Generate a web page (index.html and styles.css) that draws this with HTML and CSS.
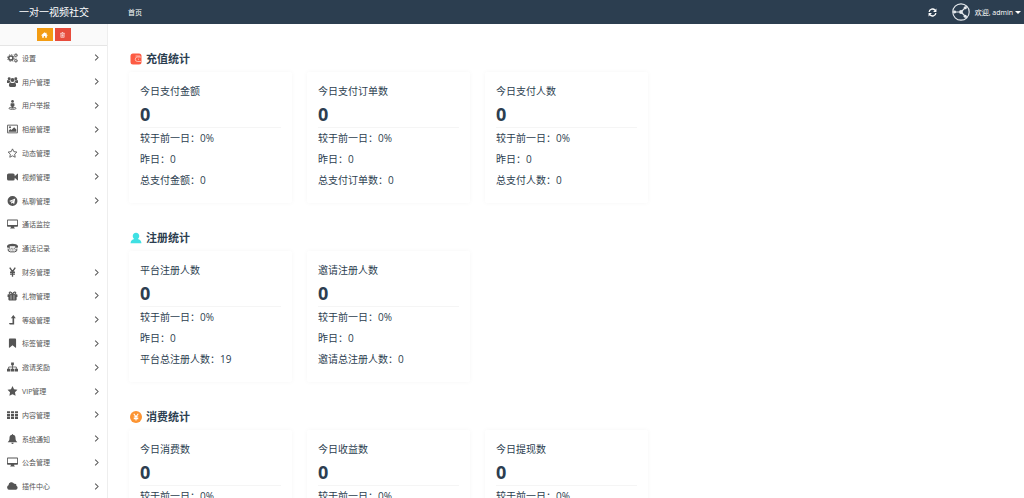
FILE: index.html
```html
<!DOCTYPE html>
<html lang="zh-CN">
<head>
<meta charset="utf-8">
<meta name="viewport" content="width=device-width, initial-scale=1">
<title>一对一视频社交</title>
<link rel="stylesheet" href="styles.css">
</head>
<body>
<svg class="sprite" aria-hidden="true">
  <symbol id="chevron" viewBox="0 0 6 8"><path d="M1.800 1.500 4.400 4 1.800 6.500" fill="none" stroke="currentColor" stroke-width=".9"/></symbol>
  <symbol id="cogs" viewBox="0 0 20 18"><g fill="none" stroke="currentColor"><circle cx="7" cy="9" r="3.800" stroke-width="2.800"/><circle cx="7" cy="9" r="5.900" stroke-width="1.800" stroke-dasharray="2.500 2.130"/><circle cx="16" cy="4.200" r="2" stroke-width="1.800"/><circle cx="16" cy="4.200" r="3.400" stroke-width="1.200" stroke-dasharray="1.700 1.860"/><circle cx="16" cy="13.800" r="2" stroke-width="1.800"/><circle cx="16" cy="13.800" r="3.400" stroke-width="1.200" stroke-dasharray="1.700 1.860"/></g></symbol>
  <symbol id="users" viewBox="0 0 20 18"><circle cx="4" cy="3" r="2.700"/><circle cx="16" cy="3" r="2.700"/><circle cx="10" cy="5.500" r="3.700"/><path d="M0 10V7.500q0-2 1.500-2 2 1.300 3.800.6Q5.500 8.300 6.500 9.300q-2 0-3 1.700H1Q0 11 0 10zM20 10V7.500q0-2-1.500-2-2 1.300-3.800.6-.2 2.200-1.200 3.200 2 0 3 1.700H19q1 0 1-1zM3.500 15.500q0-5.500 3.200-5.500 3.300 2 6.600 0 3.200 0 3.200 5.500 0 2.500-2.500 2.500H6q-2.500 0-2.500-2.500z"/></symbol>
  <symbol id="street" viewBox="0 0 20 18"><circle cx="10" cy="2.600" r="2.500"/><path d="M7.500 5.600h5q1 0 1 1V11h-1.300v4.500H7.800V11H6.500V6.600q0-1 1-1z"/><path d="M7 13.300c-6 1-4 3.600 3 3.600s9-2.600 3-3.600" fill="none" stroke="currentColor" stroke-width="1.600"/></symbol>
  <symbol id="image" viewBox="0 0 20 18"><path d="M1 2h18v14H1z" fill="none" stroke="currentColor" stroke-width="1.600"/><circle cx="5.500" cy="6" r="1.800"/><path d="M3 14v-2l3-3 2 2 5-5 4 4v4z"/></symbol>
  <symbol id="star-o" viewBox="0 0 20 18"><path d="m10 1.500 2.400 5 5.500.8-4 3.900 1 5.500-4.900-2.600-4.900 2.600 1-5.500-4-3.900 5.500-.8z" fill="none" stroke="currentColor" stroke-width="1.600"/></symbol>
  <symbol id="video" viewBox="0 0 20 18"><path d="M3 2.500h8q3 0 3 3v2L19 3q1-.5 1 .5v11q0 1-1 .5l-5-4.500v2q0 3-3 3H3q-3 0-3-3v-7q0-3 3-3z"/></symbol>
  <symbol id="telegram" viewBox="0 0 20 18"><path fill-rule="evenodd" d="M10 0a9 9 0 1 1 0 18 9 9 0 0 1 0-18zM4 9l3 1.200L8 14l2-1.700 3 2L15 4.500zM7.800 10 13 6.500l-4 4-.4 1.800z"/></symbol>
  <symbol id="desktop" viewBox="0 0 20 18"><path fill-rule="evenodd" d="M1.500 1h17Q20 1 20 2.500v10q0 1.500-1.500 1.500H13v1.500l1.500 1.500h-9L7 15.500V14H1.500Q0 14 0 12.500v-10Q0 1 1.500 1zM1.500 2.500V11h17V2.500z"/></symbol>
  <symbol id="tty" viewBox="0 0 20 18"><path d="M0 8V5.500C2 0 18 0 20 5.500V8l-5 .8V6H5v2.800z"/><g fill="none" stroke="currentColor" stroke-width="1.600" stroke-dasharray="1.900 1"><path d="M4 9.500h12M3 12.500h14"/></g><path d="M2 10q-1 6 4 6h8q5 0 4-6" fill="none" stroke="currentColor" stroke-width="1.800"/></symbol>
  <symbol id="yen" viewBox="0 0 20 18"><path d="m5 1 5 7.500L15 1M10 8v9.500M5.500 9.500h9M5.500 12.700h9" fill="none" stroke="currentColor" stroke-width="2.400"/></symbol>
  <symbol id="gift" viewBox="0 0 20 18"><path d="M2 6h16q1 0 1 1v4h-1.500v4.500q0 1.500-1.500 1.500H4q-1.500 0-1.500-1.500V11H1V7q0-1 1-1z"/><path d="M10 6C8 1 4 1 4 3.600S8 6 10 6c2 0 6 .2 6-2.400S12 1 10 6z" fill="none" stroke="currentColor" stroke-width="1.900"/><path d="M7.300 7.500v8M12.700 7.500v8" stroke="#fff" stroke-width="1"/></symbol>
  <symbol id="level" viewBox="0 0 20 18"><path d="M11.500 0 16 6h-3v11H5l-1.500-2.500H10V6H7z"/></symbol>
  <symbol id="bookmark" viewBox="0 0 20 18"><path d="M5 1h10q1.500 0 1.500 1.500V17q-.5 1-1.500.3L10 13l-5 4.300Q4 18 3.500 17V2.500Q3.500 1 5 1z"/></symbol>
  <symbol id="sitemap" viewBox="0 0 20 18"><path d="M7.500 1h5v5h-5zM0 12h6v5H0zM7 12h6v5H7zM14 12h6v5h-6z"/><path d="M10 5v8M3 13V9h14v4" fill="none" stroke="currentColor" stroke-width="1.500"/></symbol>
  <symbol id="star" viewBox="0 0 20 18"><path d="m10 0 2.800 6 6.200.9-4.500 4.500 1.100 6.300L10 14.700l-5.600 3 1.100-6.300L1 6.900 7.200 6z"/></symbol>
  <symbol id="grid" viewBox="0 0 20 18"><path d="M0 2h5.500v4H0zM7.200 2h5.600v4H7.200zM14.500 2H20v4h-5.500zM0 7.200h5.500v4H0zM7.200 7.200h5.600v4H7.200zM14.500 7.200H20v4h-5.500zM0 12.400h5.500v4H0zM7.200 12.400h5.600v4H7.200zM14.500 12.400H20v4h-5.500z"/></symbol>
  <symbol id="bell" viewBox="0 0 20 18"><path d="M10 0q1 0 1 1.300c4 .7 4.500 3.700 4.500 6.700 0 3 1 4.500 3 6.500v.5h-17v-.5c2-2 3-3.500 3-6.500 0-3 .5-6 4.500-6.700Q9 0 10 0zM7.800 15.700h4.400q-.4 2.300-2.200 2.300t-2.200-2.300z"/></symbol>
  <symbol id="cloud" viewBox="0 0 20 18"><path d="M4.500 16A4.500 4.500 0 0 1 2.700 7.500 5.500 5.500 0 0 1 13 5a3 3 0 0 1 4 3.500A4 4 0 0 1 16 16z"/></symbol>
  <symbol id="home" viewBox="0 0 20 18"><path d="m10 1 3.500 3V2H16v4.500L20 10l-1.200 1L17 9.700V17h-5v-5H8v5H3V9.700L1.200 11 0 10z"/></symbol>
  <symbol id="trash" viewBox="0 0 20 18"><path d="M3 4h14M7.500 4l1-2.500h3l1 2.500M5 4.500V16h10V4.500M8 7v6.500M10 7v6.500M12 7v6.500" fill="none" stroke="currentColor" stroke-width="1.700"/></symbol>
</svg>

<header class="topbar">
  <a class="brand" href="#">一对一视频社交</a>
  <nav class="topnav"><a href="#">首页</a></nav>
  <div class="account">
    <button class="plain" type="button" aria-label="刷新">
      <svg class="refresh" viewBox="0 0 16 16"><path d="M2 7a6 6 0 0 1 10.500-3M14 9a6 6 0 0 1-10.500 3" fill="none" stroke="currentColor" stroke-width="2.400"/><path d="M15 1v6H9zM1 15V9h6z"/></svg>
    </button>
    <button class="plain user" type="button">
      <svg class="avatar" viewBox="0 0 34 34"><g fill="none" stroke="currentColor" stroke-width="2.200"><circle cx="17" cy="17" r="15.500"/><path d="M2 17h15l8-8M17 17l8 8M25 9l3-3M25 25l3 3"/></g><circle cx="17" cy="17" r="3.600"/><circle cx="25" cy="9" r="3"/><circle cx="25" cy="25" r="3"/><circle cx="5" cy="17" r="2.800"/></svg>
      <span>欢迎, admin</span><i class="caret"></i>
    </button>
  </div>
</header>

<div class="layout">
  <aside class="sidebar">
    <div class="tools">
      <button class="tool home" type="button" aria-label="首页"><svg><use href="#home"/></svg></button>
      <button class="tool clear" type="button" aria-label="清除缓存"><svg><use href="#trash"/></svg></button>
    </div>
    <nav class="menu">
      <a href="#"><svg class="icon"><use href="#cogs"/></svg><span>设置</span><svg class="arrow"><use href="#chevron"/></svg></a>
      <a href="#"><svg class="icon"><use href="#users"/></svg><span>用户管理</span><svg class="arrow"><use href="#chevron"/></svg></a>
      <a href="#"><svg class="icon"><use href="#street"/></svg><span>用户举报</span><svg class="arrow"><use href="#chevron"/></svg></a>
      <a href="#"><svg class="icon"><use href="#image"/></svg><span>相册管理</span><svg class="arrow"><use href="#chevron"/></svg></a>
      <a href="#"><svg class="icon"><use href="#star-o"/></svg><span>动态管理</span><svg class="arrow"><use href="#chevron"/></svg></a>
      <a href="#"><svg class="icon"><use href="#video"/></svg><span>视频管理</span><svg class="arrow"><use href="#chevron"/></svg></a>
      <a href="#"><svg class="icon"><use href="#telegram"/></svg><span>私聊管理</span><svg class="arrow"><use href="#chevron"/></svg></a>
      <a href="#"><svg class="icon"><use href="#desktop"/></svg><span>通话监控</span></a>
      <a href="#"><svg class="icon"><use href="#tty"/></svg><span>通话记录</span></a>
      <a href="#"><svg class="icon"><use href="#yen"/></svg><span>财务管理</span><svg class="arrow"><use href="#chevron"/></svg></a>
      <a href="#"><svg class="icon"><use href="#gift"/></svg><span>礼物管理</span><svg class="arrow"><use href="#chevron"/></svg></a>
      <a href="#"><svg class="icon"><use href="#level"/></svg><span>等级管理</span><svg class="arrow"><use href="#chevron"/></svg></a>
      <a href="#"><svg class="icon"><use href="#bookmark"/></svg><span>标签管理</span><svg class="arrow"><use href="#chevron"/></svg></a>
      <a href="#"><svg class="icon"><use href="#sitemap"/></svg><span>邀请奖励</span><svg class="arrow"><use href="#chevron"/></svg></a>
      <a href="#"><svg class="icon"><use href="#star"/></svg><span>VIP管理</span><svg class="arrow"><use href="#chevron"/></svg></a>
      <a href="#"><svg class="icon"><use href="#grid"/></svg><span>内容管理</span><svg class="arrow"><use href="#chevron"/></svg></a>
      <a href="#"><svg class="icon"><use href="#bell"/></svg><span>系统通知</span><svg class="arrow"><use href="#chevron"/></svg></a>
      <a href="#"><svg class="icon"><use href="#desktop"/></svg><span>公会管理</span><svg class="arrow"><use href="#chevron"/></svg></a>
      <a href="#"><svg class="icon"><use href="#cloud"/></svg><span>插件中心</span><svg class="arrow"><use href="#chevron"/></svg></a>
    </nav>
  </aside>

  <main class="content">
    <section class="stats">
      <h2><svg viewBox="0 0 24 24"><rect x="1" y="1" width="22" height="22" rx="5" fill="#fd5b43"/><path d="M22 8h-7a4.500 4.500 0 0 0 0 9h7M16 12.500h2M11 6h9" fill="none" stroke="#fff" stroke-opacity=".75" stroke-width="1.500"/></svg>充值统计</h2>
      <div class="cards">
        <article class="card"><h3>今日支付金额</h3><strong>0</strong><p>较于前一日：0%</p><p>昨日：0</p><p>总支付金额：0</p></article>
        <article class="card"><h3>今日支付订单数</h3><strong>0</strong><p>较于前一日：0%</p><p>昨日：0</p><p>总支付订单数：0</p></article>
        <article class="card"><h3>今日支付人数</h3><strong>0</strong><p>较于前一日：0%</p><p>昨日：0</p><p>总支付人数：0</p></article>
      </div>
    </section>
    <section class="stats">
      <h2><svg viewBox="0 0 24 24"><path d="M12 1.500c4 0 6.500 2.800 6.500 6.300 0 2.700-1.300 4.700-3 6 4 1 7 3.200 7.500 8.700H1c.5-5.500 3.500-7.700 7.500-8.700-1.700-1.300-3-3.300-3-6C5.500 4.300 8 1.500 12 1.500z" fill="#3fe0e3"/></svg>注册统计</h2>
      <div class="cards">
        <article class="card"><h3>平台注册人数</h3><strong>0</strong><p>较于前一日：0%</p><p>昨日：0</p><p>平台总注册人数：19</p></article>
        <article class="card"><h3>邀请注册人数</h3><strong>0</strong><p>较于前一日：0%</p><p>昨日：0</p><p>邀请总注册人数：0</p></article>
      </div>
    </section>
    <section class="stats">
      <h2><svg viewBox="0 0 24 24"><circle cx="12" cy="12" r="12" fill="#fc9432"/><path d="m7.500 5.500 4.500 6 4.500-6M12 11v8M7.500 12h9M7.500 15.200h9" fill="none" stroke="#fff" stroke-width="2.200"/></svg>消费统计</h2>
      <div class="cards">
        <article class="card"><h3>今日消费数</h3><strong>0</strong><p>较于前一日：0%</p><p>昨日：0</p></article>
        <article class="card"><h3>今日收益数</h3><strong>0</strong><p>较于前一日：0%</p><p>昨日：0</p></article>
        <article class="card"><h3>今日提现数</h3><strong>0</strong><p>较于前一日：0%</p><p>昨日：0</p></article>
      </div>
    </section>
  </main>
</div>
</body>
</html>
```
FILE: styles.css
```css
* { box-sizing: border-box; }

body {
  display: flex;
  flex-direction: column;
  height: 100vh;
  margin: 0;
  overflow: hidden;
  background: #fff;
  color: #2c3e50;
  font-family: "Open Sans", "Noto Sans CJK SC", sans-serif;
  font-size: 7px;
}

a { color: inherit; text-decoration: none; }
svg { display: block; fill: currentColor; }
.sprite { position: absolute; width: 0; height: 0; }

.topbar {
  display: flex;
  flex: none;
  align-items: center;
  height: 24px;
  padding-right: 3px;
  background: #2c3e50;
  color: #fff;
}
.brand {
  width: 108px;
  font-size: 10px;
  line-height: 22px;
  text-align: center;
}
.topnav { flex: 1; padding-left: 20px; }

.account { display: flex; align-items: center; gap: 15px; }
.plain {
  display: flex;
  align-items: center;
  padding: 0;
  border: 0;
  background: none;
  color: inherit;
  font: inherit;
}
.user { gap: 5px; }
.refresh { width: 9px; height: 9px; }
.avatar { width: 18px; height: 18px; color: #e4e8ec; }
.caret {
  margin-left: -3px;
  border: 3px solid transparent;
  border-top-color: #fff;
  border-bottom: 0;
}

.layout { display: flex; flex: 1; min-height: 0; }

.sidebar {
  display: flex;
  flex: none;
  flex-direction: column;
  width: 108px;
  border-right: 1px solid #eee;
  color: #555;
}
.tools {
  display: flex;
  flex: none;
  align-items: center;
  justify-content: center;
  gap: 2px;
  height: 22px;
  border-bottom: 1px solid #e5e5e5;
  background: #fafafa;
}
.tool {
  display: grid;
  place-items: center;
  width: 16px;
  height: 13px;
  padding: 0;
  border: 0;
  color: #fff;
}
.tool svg { width: 7px; height: 6px; }
.home { background: #f39c12; }
.clear { background: #e74c3c; }

.menu { display: flex; flex: 1; flex-direction: column; min-height: 0; }
.menu a {
  display: flex;
  flex: 1;
  align-items: center;
  gap: 4px;
  min-height: 20px;
  padding: 0 7px;
}
.menu span { flex: 1; }
.icon { width: 11px; height: 10px; }
.arrow { width: 7px; height: 9px; }

.content {
  flex: 1;
  min-width: 0;
  padding: 25px 20px 0 21px;
  overflow: hidden;
}
.stats { margin-bottom: 25px; }
.stats h2 {
  display: flex;
  align-items: center;
  gap: 4px;
  margin: 0 0 3px;
  padding-left: 1px;
  font-size: 11px;
  line-height: 20px;
}
.stats h2 svg { width: 12px; height: 12px; }

.cards { display: flex; flex-wrap: wrap; gap: 15px; }
.card {
  flex: none;
  width: 163px;
  padding: 10px 11px 12px;
  border-radius: 2px;
  box-shadow: 0 0 5px rgba(0, 0, 0, 0.04);
  font-size: 10px;
}
.card h3 { margin: 0; font-size: 10px; font-weight: 400; line-height: 19px; }
.card strong {
  display: block;
  border-bottom: 1px solid #f5f5f5;
  font-size: 18px;
  line-height: 26px;
}
.card p { margin: 0; line-height: 21px; }
```
